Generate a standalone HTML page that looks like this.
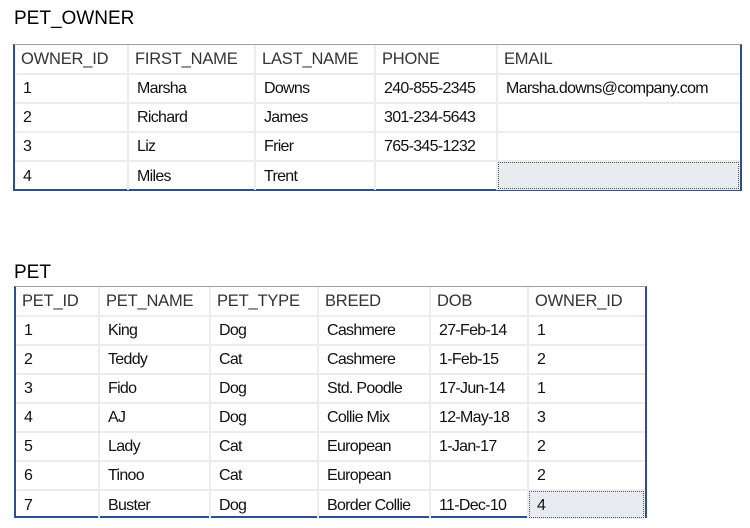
<!DOCTYPE html>
<html><head><meta charset="utf-8"><style>
body{margin:0;width:750px;height:528px;background:#fff;position:relative;overflow:hidden;font-family:"Liberation Sans",Arial,sans-serif;}
.title{position:absolute;left:14px;font-size:19px;color:#000;}
.w{position:absolute;border-top:1px solid #a0a0a0;border-left:2px solid #2b4f8f;border-right:2px solid #2b4f8f;border-bottom:2px solid #2b4f8f;box-sizing:border-box;background:#fff;}
table{border-collapse:collapse;table-layout:fixed;width:100%;}
td{border:2px solid #ececec;padding:1px 0 0 8px;font-size:16px;color:#111;letter-spacing:-0.7px;white-space:nowrap;overflow:hidden;}
tr:first-child td{border-top:none;}
td:first-child{border-left:none;}
td:last-child{border-right:none;}
tr:last-child td{border-bottom:none;}
tr.h td{font-size:16.5px;color:#333;letter-spacing:-0.2px;padding:0 0 0 6px;}
td.sel{background:#e8ecf0;outline:1px dotted #555;outline-offset:-2px;}
</style></head><body>
<div class="title" style="top:8px">PET_OWNER</div>
<div class="w" style="left:13px;top:44px;width:729px;height:147px">
<table>
<colgroup><col style="width:113px"><col style="width:127px"><col style="width:120px"><col style="width:122px"><col></colgroup>
<tr class="h" style="height:29px"><td>OWNER_ID</td><td>FIRST_NAME</td><td>LAST_NAME</td><td>PHONE</td><td>EMAIL</td></tr>
<tr style="height:29px"><td>1</td><td>Marsha</td><td>Downs</td><td>240-855-2345</td><td>Marsha.downs@company.com</td></tr>
<tr style="height:29px"><td>2</td><td>Richard</td><td>James</td><td>301-234-5643</td><td></td></tr>
<tr style="height:29px"><td>3</td><td>Liz</td><td>Frier</td><td>765-345-1232</td><td></td></tr>
<tr style="height:29px"><td>4</td><td>Miles</td><td>Trent</td><td></td><td class="sel"></td></tr>
</table></div>
<div class="title" style="top:262px">PET</div>
<div class="w" style="left:14px;top:286px;width:633px;height:232px">
<table>
<colgroup><col style="width:83px"><col style="width:111px"><col style="width:108px"><col style="width:112px"><col style="width:98px"><col></colgroup>
<tr class="h" style="height:29px"><td>PET_ID</td><td>PET_NAME</td><td>PET_TYPE</td><td>BREED</td><td>DOB</td><td>OWNER_ID</td></tr>
<tr style="height:29px"><td>1</td><td>King</td><td>Dog</td><td>Cashmere</td><td>27-Feb-14</td><td>1</td></tr>
<tr style="height:29px"><td>2</td><td>Teddy</td><td>Cat</td><td>Cashmere</td><td>1-Feb-15</td><td>2</td></tr>
<tr style="height:29px"><td>3</td><td>Fido</td><td>Dog</td><td>Std. Poodle</td><td>17-Jun-14</td><td>1</td></tr>
<tr style="height:29px"><td>4</td><td>AJ</td><td>Dog</td><td>Collie Mix</td><td>12-May-18</td><td>3</td></tr>
<tr style="height:29px"><td>5</td><td>Lady</td><td>Cat</td><td>European</td><td>1-Jan-17</td><td>2</td></tr>
<tr style="height:29px"><td>6</td><td>Tinoo</td><td>Cat</td><td>European</td><td></td><td>2</td></tr>
<tr style="height:29px"><td>7</td><td>Buster</td><td>Dog</td><td>Border Collie</td><td>11-Dec-10</td><td class="sel">4</td></tr>
</table></div>
</body></html>
